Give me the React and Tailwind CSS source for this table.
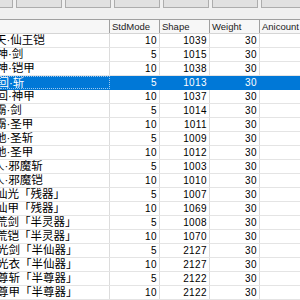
import React from 'react';

// rows of the item list, scrolled so the left part of each name is cut off
const rows = [
  { name: '天·仙王铠', shift: -5, std: 10, shape: 1039 },
  { name: '战神·剑', shift: -15, std: 5, shape: 1015 },
  { name: '战神·铠甲', shift: -15, std: 10, shape: 1038 },
  { name: '轮回·斩', shift: -15, std: 5, shape: 1013 },
  { name: '轮回·神甲', shift: -15, std: 10, shape: 1037 },
  { name: '霸·剑', shift: -5, std: 5, shape: 1014 },
  { name: '霸·圣甲', shift: -5, std: 10, shape: 1011 },
  { name: '地·圣斩', shift: -5, std: 5, shape: 1009 },
  { name: '地·圣甲', shift: -5, std: 10, shape: 1012 },
  { name: '人·邪魔斩', shift: -7, std: 5, shape: 1003 },
  { name: '人·邪魔铠', shift: -7, std: 10, shape: 1010 },
  { name: '仙光「残器」', shift: -4, std: 5, shape: 1007 },
  { name: '仙甲「残器」', shift: -4, std: 10, shape: 1069 },
  { name: '荒剑「半灵器」', shift: -4, std: 5, shape: 1008 },
  { name: '荒铠「半灵器」', shift: -4, std: 10, shape: 1070 },
  { name: '光剑「半仙器」', shift: -3, std: 5, shape: 2127 },
  { name: '光衣「半仙器」', shift: -3, std: 10, shape: 2127 },
  { name: '尊斩「半尊器」', shift: -3, std: 5, shape: 2122 },
  { name: '尊甲「半尊器」', shift: -3, std: 10, shape: 2122 },
];

const SELECTED = 3;

const font = { fontFamily: '"Liberation Sans", "Noto Sans CJK SC", sans-serif' };

export default function App() {
  return (
    <div className="w-[300px] h-[300px] overflow-hidden bg-[#f0f0f0] text-black" style={font}>
      {/* toolbar buttons, cut off at the top */}
      <div className="h-[19px] flex gap-[3px] -ml-[33px]">
        {Array.from({ length: 8 }).map((_, i) => (
          <div
            key={i}
            className="w-[46px] h-[8px] shrink-0 bg-[#e1e1e1] border border-t-0 border-[#adadad]"
          />
        ))}
      </div>

      {/* grid */}
      <div className="bg-white border-t border-[#a0a0a0]">
        <div className="flex h-[14px] bg-[#f7f7f7] border-b border-[#d5d5d5] text-[9.5px] text-[#222] leading-[13px]">
          <div className="w-[110px] shrink-0 border-r border-[#a0a0a0]" />
          <div className="w-[50px] shrink-0 border-r border-[#a0a0a0] pl-[2px]">StdMode</div>
          <div className="w-[50px] shrink-0 border-r border-[#a0a0a0] pl-[2px]">Shape</div>
          <div className="w-[50px] shrink-0 border-r border-[#a0a0a0] pl-[2px]">Weight</div>
          <div className="flex-1 pl-[2px]">Anicount</div>
        </div>

        {rows.map((r, i) => {
          const sel = i === SELECTED;
          return (
            <div
              key={i}
              className={`flex h-[14px] border-b leading-[13px] text-[10px] tracking-[0.4px] ${
                sel ? 'bg-[#0078d7] text-white border-[#0078d7]' : 'border-[#e4e4e4]'
              }`}
            >
              <div
                className={`w-[110px] shrink-0 overflow-hidden whitespace-nowrap text-[11.5px] tracking-normal ${
                  sel ? 'border border-dotted border-[#9cc8ee]' : 'border-r border-[#dcdcdc]'
                }`}
              >
                <span className="inline-block" style={{ marginLeft: r.shift }}>
                  {r.name}
                </span>
              </div>
              <div className={`w-[50px] shrink-0 text-right pr-[2px] border-r ${sel ? 'border-[#0078d7]' : 'border-[#dcdcdc]'}`}>
                {r.std}
              </div>
              <div className={`w-[50px] shrink-0 text-right pr-[2px] border-r ${sel ? 'border-[#0078d7]' : 'border-[#dcdcdc]'}`}>
                {r.shape}
              </div>
              <div className={`w-[50px] shrink-0 text-right pr-[2px] border-r ${sel ? 'border-[#0078d7]' : 'border-[#dcdcdc]'}`}>
                30
              </div>
              <div className="flex-1" />
            </div>
          );
        })}
      </div>
    </div>
  );
}
